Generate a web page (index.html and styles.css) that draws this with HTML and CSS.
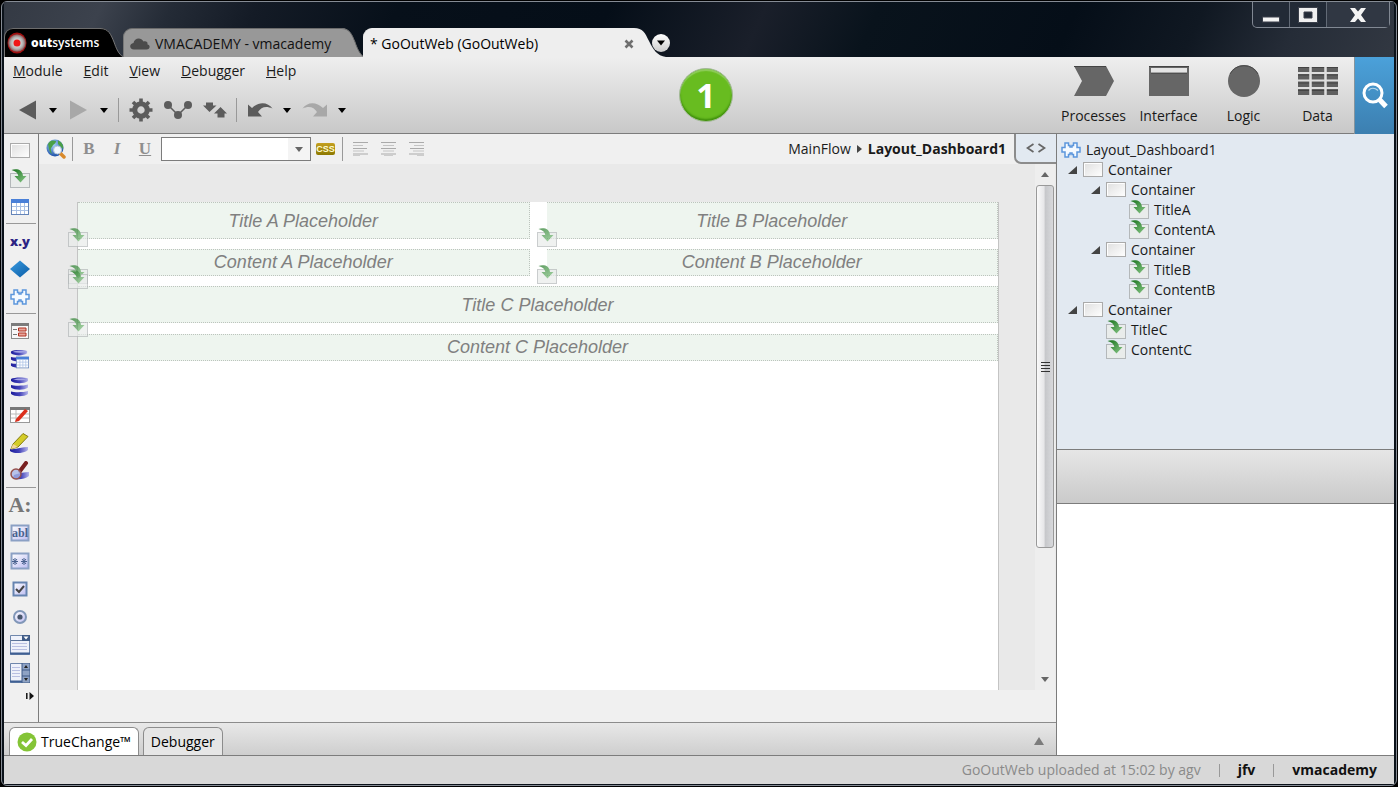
FILE: index.html
```html
<!DOCTYPE html>
<html lang="en">
<head>
<meta charset="utf-8">
<title>GoOutWeb</title>
<link rel="stylesheet" href="styles.css">
</head>
<body>
<svg class="defs" width="0" height="0" aria-hidden="true">
  <defs>
    <linearGradient id="gBox" x1="0" y1="0" x2="1" y2="1"><stop offset="0" stop-color="#dedede"/><stop offset="1" stop-color="#fff"/></linearGradient>
    <linearGradient id="gGreen" x1="0" y1="0" x2="1" y2="1"><stop offset="0" stop-color="#15701a"/><stop offset="1" stop-color="#8cc98a"/></linearGradient>
    <linearGradient id="gBlue" x1="0" y1="0" x2="1" y2="1"><stop offset="0" stop-color="#3a9be0"/><stop offset="1" stop-color="#0a5ca6"/></linearGradient>
    <linearGradient id="gDisk" x1="0" y1="0" x2="1" y2="0"><stop offset="0" stop-color="#1c1c9c"/><stop offset=".5" stop-color="#4242b8"/><stop offset="1" stop-color="#b4b4ea"/></linearGradient>
    <linearGradient id="gField" x1="0" y1="0" x2="1" y2="1"><stop offset="0" stop-color="#fff"/><stop offset="1" stop-color="#bcbcf2"/></linearGradient>
    <radialGradient id="gGlobe" cx=".4" cy=".3" r=".7"><stop offset="0" stop-color="#a8d4f8"/><stop offset="1" stop-color="#1c50a8"/></radialGradient>
    <radialGradient id="gLogo"><stop offset="0" stop-color="#fff"/><stop offset=".7" stop-color="#b0b0b0"/><stop offset="1" stop-color="#8a5050"/></radialGradient>
    <symbol id="i-container" viewBox="0 0 20 20"><rect x=".5" y="2.500" width="19" height="14" fill="url(#gBox)" stroke="#aaa"/><path d="M1.500 15.500V3.500H18.500" fill="none" stroke="#fff"/></symbol>
    <symbol id="i-placeholder" viewBox="0 0 20 20"><rect x=".5" y="4.500" width="19" height="14" fill="#e9eceb" stroke="#b4b8ba"/><path d="M1.500 1C6-.8 12.500 0 13 7H16.500L10.500 13.500 4.500 7H8.300C8 4 5.500 2 1.500 1Z" fill="url(#gGreen)"/></symbol>
    <symbol id="i-webblock" viewBox="0 0 20 18"><path d="M4 2H7.500V4.500H9V6H11V4.500H12.500V2H16V6.500H19V11H16V16H12.500V13.500H11V12H9V13.500H7.500V16H4V11H1V6.500H4Z" fill="#f5faff" stroke="#5c96dc" stroke-width="1.500"/></symbol>
    <symbol id="i-caret" viewBox="0 0 8 5"><path d="M0 0H8L4 5Z"/></symbol>
    <symbol id="i-table" viewBox="0 0 20 18"><rect x="1.500" y="1.500" width="17" height="15" fill="#fff" stroke="#6484b8"/><path d="M1 1H19V5H1Z" fill="#4a80d8"/><path d="M2 8.500H18M2 12.500H18M6.500 5V16M10.500 5V16M14.500 5V16" stroke="#a9c0e4"/></symbol>
    <symbol id="i-disks" viewBox="0 0 20 20"><g fill="url(#gDisk)"><path d="M1 2C4 0 14 0 18 1.500V4C14 7 5 7 1 4Z"/><path d="M1 8C4 9 14 9 18 7.500V10.500C14 13.500 5 13.500 1 10.500Z"/><path d="M1 14.500C4 15.500 14 15.500 18 14V17C14 20 5 20 1 17Z"/></g><path d="M3 2.500C7 1 13 1 17 2.500C13 3.600 7 3.600 3 2.500Z" fill="#a4a4e4"/></symbol>
    <symbol id="i-left" viewBox="0 0 15 14"><path d="M0 .5H15M0 6.500H14M0 12H15" stroke="#aaa"/><path d="M0 3.500H10M0 9H11M0 13.700H7" stroke="#c4c4c4"/></symbol>
    <symbol id="i-center" viewBox="0 0 15 14"><path d="M0 .5H15M0 6.500H15M0 12H15" stroke="#aaa"/><path d="M2 3.500H13M2 9H13M3 13.700H12" stroke="#c4c4c4"/></symbol>
    <symbol id="i-right" viewBox="0 0 15 14"><path d="M0 .5H15M1 6.500H15M0 12H15" stroke="#aaa"/><path d="M5 3.500H15M4 9H15M8 13.700H15" stroke="#c4c4c4"/></symbol>
  </defs>
</svg>

<div class="window">
  <header class="titlebar">
    <nav class="tabs">
      <a class="tab tab-brand" href="#">
        <span class="tab-body">
          <svg width="20" height="22" viewBox="0 0 20 22"><ellipse cx="10" cy="11" rx="9.500" ry="10.500" fill="#a01010"/><circle cx="10" cy="11" r="8.800" fill="url(#gLogo)"/><circle cx="10" cy="11" r="3.500" fill="#f01818"/></svg>
          <span class="brand"><b>out</b>systems</span>
        </span>
        <svg class="slope" width="23" height="29" viewBox="0 0 23 29"><path d="M0 0C9 0 11 7 14 14C16 20 19 27 23 29H0Z" fill="#000"/><path d="M0 .5C9 .5 11 7 14 14C16 20 19 27 23 28.500" fill="none" stroke="#777"/></svg>
      </a>
      <a class="tab tab-server" href="#">
        <span class="tab-body">
          <svg width="20" height="12" viewBox="0 0 20 12"><path d="M4 11.500C-1 11.500-1 5.500 3.500 5C4 0 11-1.500 13.500 3.500C17 2.500 18 5 17.300 6.200C21 7 20 11.500 16.500 11.500Z" fill="#4b4b4b"/></svg>
          <span>VMACADEMY - vmacademy</span>
        </span>
        <svg class="slope" width="23" height="29" viewBox="0 0 23 29"><path d="M0 0C9 0 11 7 14 14C16 20 19 27 23 29H0Z" fill="#989898"/><path d="M0 .5C9 .5 11 7 14 14C16 20 19 27 23 28.500" fill="none" stroke="#6c6c6c"/></svg>
      </a>
      <div class="tab tab-module">
        <span class="tab-body">
          <span>* GoOutWeb (GoOutWeb)</span>
          <button class="tab-close" aria-label="Close tab"><svg width="10" height="10" viewBox="0 0 10 10"><path d="M1.500 1.500L8.500 8.500M8.500 1.500L1.500 8.500" stroke="#6e6e6e" stroke-width="2.600"/></svg></button>
        </span>
        <svg class="slope" width="32" height="29" viewBox="0 0 32 29"><path d="M0 0C9 0 11 5 15 13C19 21 23 28 32 29H0Z" fill="#eee"/></svg>
      </div>
      <button class="tab-list" aria-label="All tabs"><svg width="8" height="6"><use href="#i-caret"/></svg></button>
    </nav>
    <div class="win-controls">
      <button aria-label="Minimize"><svg width="18" height="16" viewBox="0 0 18 16"><rect x=".5" y="10" width="17" height="5" fill="#f4f4f4" stroke="#3a3f4a"/></svg></button>
      <button aria-label="Maximize"><svg width="20" height="16" viewBox="0 0 20 16"><path d="M.5 .5H19.500V15.500H.5ZM6 5V11H14V5Z" fill="#f0f0f0" fill-rule="evenodd" stroke="#3a3f4a"/></svg></button>
      <button class="win-close" aria-label="Close"><svg width="18" height="16" viewBox="0 0 18 16"><path d="M1 1H6L9 4.500L12 1H17L12 8L17 15H12L9 11.500L6 15H1L6 8Z" fill="#f4f4f4"/></svg></button>
    </div>
  </header>

  <div class="ribbon">
    <div class="commands">
      <nav class="menu">
        <button><u>M</u>odule</button><button><u>E</u>dit</button><button><u>V</u>iew</button><button><u>D</u>ebugger</button><button><u>H</u>elp</button>
      </nav>
      <div class="toolbar">
        <button aria-label="Back"><svg width="19" height="20" viewBox="0 0 19 20"><path d="M1 10L18 .5V19.500Z" fill="#5c5c5c"/></svg></button>
        <button class="drop" aria-label="Back history"><svg width="8" height="5"><use href="#i-caret"/></svg></button>
        <button aria-label="Forward"><svg width="19" height="20" viewBox="0 0 19 20"><path d="M18 10L1 .5V19.500Z" fill="#a8a8a8"/></svg></button>
        <button class="drop" aria-label="Forward history"><svg width="8" height="5"><use href="#i-caret"/></svg></button>
        <span class="sep"></span>
        <button aria-label="Settings"><svg width="24" height="24" viewBox="-12 -12 24 24"><circle r="6.200" fill="none" stroke="#5c5c5c" stroke-width="5"/><path d="M0-8V-11.500M0 8V11.500M-8 0H-11.500M8 0H11.500M-5.700-5.700L-8-8M5.700-5.700L8-8M-5.700 5.700L-8 8M5.700 5.700L8 8" stroke="#5c5c5c" stroke-width="3.600"/></svg></button>
        <button aria-label="Dependencies"><svg width="28" height="18" viewBox="0 0 28 18"><path d="M4 4L14 14L24 4" fill="none" stroke="#5c5c5c" stroke-width="1.500"/><g fill="#5c5c5c"><circle cx="4" cy="4" r="4"/><circle cx="24" cy="4" r="4"/><circle cx="14" cy="14" r="4"/></g></svg></button>
        <button aria-label="Publish"><svg width="24" height="16" viewBox="0 0 24 16"><path d="M3 .5H10V3.500H13.500L6.500 10L0 3.500H3Z" fill="#5c5c5c"/><path d="M17.500 5L24 11.500H21.500V15.500H14.500V11.500H11Z" fill="#5c5c5c"/></svg></button>
        <span class="sep"></span>
        <button aria-label="Undo"><svg width="26" height="16" viewBox="0 0 26 16"><path d="M1 2.500L5 6C12-1 21 0 25.500 6.500C19 3.500 14 5 11 10L15 14.500H1Z" fill="#5c5c5c"/></svg></button>
        <button class="drop" aria-label="Undo list"><svg width="8" height="5"><use href="#i-caret"/></svg></button>
        <button aria-label="Redo"><svg width="26" height="16" viewBox="0 0 26 16"><path d="M25 2.500L21 6C14-1 5 0 .5 6.500C7 3.500 12 5 15 10L11 14.500H25Z" fill="#a8a8a8"/></svg></button>
        <button class="drop" aria-label="Redo list"><svg width="8" height="5"><use href="#i-caret"/></svg></button>
      </div>
    </div>
    <button class="step" aria-label="1-Click Publish"><span>1</span></button>
    <nav class="layers">
      <button><svg width="40" height="32" viewBox="0 0 40 32"><path d="M0 1H32L40 16L32 31H0L8 16Z" fill="#666"/><path d="M0 1.500H32" stroke="#444"/></svg>Processes</button>
      <button><svg width="40" height="32" viewBox="0 0 40 32"><path d="M0 1H40V31H0Z" fill="#666"/><path d="M0 1.500H40" stroke="#444"/><path d="M2 3H38V7.500H2Z" fill="#e4e4e4"/><path d="M2 8.500H38" stroke="#505050"/></svg>Interface</button>
      <button><svg width="40" height="32" viewBox="0 0 40 32"><circle cx="20" cy="16" r="16" fill="#666"/><path d="M6 9A16 16 0 0 1 34 9" fill="none" stroke="#484848"/></svg>Logic</button>
      <button><svg width="40" height="32" viewBox="0 0 40 32"><path d="M0 2H40V30H0Z" fill="#606060"/><path d="M0 2.500H40M0 10H40M0 18H40M0 25.500H40" stroke="#444"/><path d="M0 8H40M0 15.500H40M0 23H40" stroke="#dedede" stroke-width="2"/><path d="M12.500 2V30M27.500 2V30" stroke="#dedede" stroke-width="2.500"/></svg>Data</button>
    </nav>
    <button class="search" aria-label="Search"><svg width="28" height="28" viewBox="0 0 28 28"><path d="M18 17L25 24.500" stroke="#fff" stroke-width="5"/><circle cx="12" cy="11" r="9" fill="none" stroke="#fff" stroke-width="3"/><path d="M7.500 8.500C10 5.500 14 6 17 8.500" fill="none" stroke="#b4d6ec" stroke-width="1.200"/></svg></button>
  </div>

  <main class="workspace">
    <section class="left">
      <div class="designer">
        <aside class="toolbox">
          <button aria-label="Container"><svg width="20" height="20"><use href="#i-container"/></svg></button>
          <button aria-label="Placeholder"><svg width="20" height="20"><use href="#i-placeholder"/></svg></button>
          <button aria-label="Table"><svg width="20" height="18"><use href="#i-table"/></svg></button>
          <hr>
          <button class="xy" aria-label="Expression">x.y</button>
          <button aria-label="If"><svg width="20" height="18" viewBox="0 0 20 18"><path d="M10 .5L20 9L10 17.500L0 9Z" fill="url(#gBlue)"/></svg></button>
          <button aria-label="Web block"><svg width="20" height="18"><use href="#i-webblock"/></svg></button>
          <hr>
          <button aria-label="Form"><svg width="20" height="18" viewBox="0 0 20 18"><rect x="1.500" y="1.500" width="17" height="15" fill="#f8f8f8" stroke="#8c8c8c"/><path d="M1 1H19V4H1Z" fill="#7c7c7c"/><path d="M3 7.500H7M3 12.500H7" stroke="#777"/><path d="M8.500 6H16V9H8.500ZM8.500 11H16V14H8.500Z" fill="#e8a69c" stroke="#b03020"/></svg></button>
          <button aria-label="Table records"><svg width="20" height="20" viewBox="0 0 20 20"><use href="#i-disks" width="19" height="20"/><svg x="5" y="7" width="15" height="13" viewBox="0 0 20 18"><use href="#i-table"/></svg></svg></button>
          <button aria-label="List records"><svg width="20" height="20"><use href="#i-disks"/></svg></button>
          <button aria-label="Edit record"><svg width="20" height="18" viewBox="0 0 20 18"><rect x=".5" y="1.500" width="19" height="15" fill="#fff" stroke="#999"/><path d="M0 1H20V4H0Z" fill="#777"/><path d="M1 8H19M1 12H19M6 4V16" stroke="#bbb"/><path d="M6 13L15 3L18 5L9 15L5 16Z" fill="#dc2f1c"/></svg></button>
          <button aria-label="Show record"><svg width="20" height="20" viewBox="0 0 20 20"><path d="M0 16C5 17 12 14 18 14V17C13 21 4 21 0 18Z" fill="url(#gDisk)"/><path d="M3 11L13 .5L18 3.500L8 14L1 16Z" fill="#d4cc28" stroke="#857c10"/><path d="M3 11L8 14L1 16Z" fill="#f3d79a"/></svg></button>
          <button aria-label="Search record"><svg width="20" height="20" viewBox="0 0 20 20"><path d="M4 14C9 12 15 11 19 11V15C14 19 6 19 3 17Z" fill="url(#gDisk)"/><path d="M10 10L16 2" stroke="#782020" stroke-width="4" stroke-linecap="round"/><circle cx="6" cy="13" r="5" fill="#a9b6e8" fill-opacity=".8" stroke="#96504c" stroke-width="1.500"/></svg></button>
          <hr>
          <button class="label-tool" aria-label="Label">A:</button>
          <button aria-label="Input"><svg width="20" height="18" viewBox="0 0 20 18"><rect x="1.500" y="1.500" width="17" height="15" fill="url(#gField)" stroke="#8ba0c4" stroke-width="2"/><text class="glyph" x="10" y="13" text-anchor="middle">abl</text></svg></button>
          <button aria-label="Password"><svg width="20" height="18" viewBox="0 0 20 18"><rect x="1.500" y="1.500" width="17" height="15" fill="url(#gField)" stroke="#8ba0c4" stroke-width="2"/><path d="M2 9.500H8M5 6V13M3 7L7 12M7 7L3 12M11 9.500H17M14 6V13M12 7L16 12M16 7L12 12" stroke="#48618e"/></svg></button>
          <button aria-label="Check box"><svg width="16" height="16" viewBox="0 0 16 16"><rect x="1.500" y="1.500" width="13" height="13" fill="url(#gField)" stroke="#6684b0" stroke-width="2"/><path d="M4 8L7 11L12 5" fill="none" stroke="#444" stroke-width="2"/></svg></button>
          <button aria-label="Radio button"><svg width="16" height="16" viewBox="0 0 16 16"><circle cx="8" cy="8" r="6" fill="url(#gField)" stroke="#8197b8" stroke-width="2"/><circle cx="8" cy="8" r="2.600" fill="#48566c"/></svg></button>
          <button aria-label="Combo box"><svg width="20" height="20" viewBox="0 0 20 20"><path d="M.5 .5H19.500V19.500H.5Z" fill="#eef1fa" stroke="#6f87ac"/><path d="M1 5.500H19V0" stroke="#5b7399" fill="none"/><path d="M12 0H20V6H12Z" fill="#3f5b87"/><path d="M13.500 1.500H18.500L16 4.500Z" fill="#fff"/><path d="M2 8.500H17M2 11.500H17M2 14.500H17" stroke="#b9c0e2"/><path d="M0 18.500H20" stroke="#3f5f93" stroke-width="2"/></svg></button>
          <button aria-label="List box"><svg width="20" height="20" viewBox="0 0 20 20"><path d="M.5 .5H19.500V19.500H.5Z" fill="#eef1fa" stroke="#6f87ac"/><path d="M12 0H20V20H12Z" fill="#8fa3c4" stroke="#3f5b87"/><path d="M12 7H20M12 13H20" stroke="#3f5b87"/><path d="M14 5H18L16 2ZM14 15H18L16 18Z" fill="#222"/><path d="M2 4.500H10M2 7.500H10M2 10.500H10M2 13.500H10" stroke="#b9c0e2"/><path d="M0 18.500H12" stroke="#3f5f93" stroke-width="2"/></svg></button>
          <button class="expand" aria-label="Expand toolbox"><svg width="8" height="8" viewBox="0 0 8 8"><path d="M.8 1V7" stroke="#111" stroke-width="1.500"/><path d="M3.500 0L8 4L3.500 8Z" fill="#111"/></svg></button>
        </aside>

        <div class="editor">
          <div class="format-bar">
            <button class="globe" aria-label="Preview in browser"><svg width="20" height="20" viewBox="0 0 20 20"><circle cx="9" cy="9" r="8.500" fill="url(#gGlobe)"/><path d="M2 5C4 1 7 1 10 2C10 5 7 5 6 8C4 9 5 12 6 15C3 13 3 9 2 5ZM12 1.500C16 3 18 7 17 10L14 7L12 5Z" fill="#4aa047"/><path d="M14.500 14.500L18 18" stroke="#d98a2c" stroke-width="3.500" stroke-linecap="round"/><circle cx="11.500" cy="11" r="4" fill="#f2f8ff" stroke="#b4c4d6"/></svg></button>
            <span class="sep"></span>
            <div class="styles"><button class="fmt">B</button><button class="fmt fmt-i">I</button><button class="fmt fmt-u">U</button></div>
            <div class="combo"><select aria-label="Style"><option></option></select><svg width="8" height="5"><use href="#i-caret"/></svg></div>
            <button class="css-btn">CSS</button>
            <span class="sep"></span>
            <div class="aligns">
              <button aria-label="Align left"><svg width="15" height="14"><use href="#i-left"/></svg></button>
              <button aria-label="Align center"><svg width="15" height="14"><use href="#i-center"/></svg></button>
              <button aria-label="Align right"><svg width="15" height="14"><use href="#i-right"/></svg></button>
            </div>
            <div class="crumbs"><a href="#">MainFlow</a><svg width="5" height="8" viewBox="0 0 5 8"><path d="M0 0L5 4L0 8Z" fill="#444"/></svg><b>Layout_Dashboard1</b></div>
            <button class="code-btn" aria-label="Source"><svg width="20" height="10" viewBox="0 0 20 10"><path d="M7.500 1L1.500 5L7.500 9M12.500 1L18.500 5L12.500 9" fill="none" stroke="#666" stroke-width="1.800"/></svg></button>
          </div>
          <div class="canvas">
            <div class="page">
              <div class="columns">
                <div class="column">
                  <div class="ph title">Title A Placeholder<svg class="mark mark-end" width="20" height="20"><use href="#i-placeholder"/></svg></div>
                  <div class="ph content">Content A Placeholder<svg class="mark mark-end" width="20" height="20"><use href="#i-placeholder"/></svg></div>
                </div>
                <div class="column">
                  <div class="ph title">Title B Placeholder<svg class="mark mark-end" width="20" height="20"><use href="#i-placeholder"/></svg></div>
                  <div class="ph content">Content B Placeholder<svg class="mark mark-end" width="20" height="20"><use href="#i-placeholder"/></svg></div>
                </div>
              </div>
              <div class="column column-wide">
                <div class="ph title">Title C Placeholder<svg class="mark mark-start" width="20" height="20"><use href="#i-placeholder"/></svg></div>
                <div class="ph content">Content C Placeholder<svg class="mark mark-start" width="20" height="20"><use href="#i-placeholder"/></svg></div>
              </div>
            </div>
            <div class="scroll">
              <button aria-label="Scroll up"><svg class="flip" width="8" height="5"><use href="#i-caret"/></svg></button>
              <div class="track"><div class="thumb"><i></i><i></i><i></i><i></i></div></div>
              <button aria-label="Scroll down"><svg width="8" height="5"><use href="#i-caret"/></svg></button>
            </div>
          </div>
          <div class="gutter"></div>
        </div>
      </div>
      <div class="panel-tabs">
        <button class="panel-tab active"><svg width="20" height="20" viewBox="0 0 20 20"><circle cx="10" cy="10" r="9.500" fill="#84c436"/><path d="M5 10L9 13.500L15 7" fill="none" stroke="#fff" stroke-width="2.800"/></svg>TrueChange™</button>
        <button class="panel-tab">Debugger</button>
        <button class="panel-up" aria-label="Expand panel"><svg width="10" height="8" viewBox="0 0 10 8"><path d="M5 0L10 8H0Z" fill="#7c7c7c"/></svg></button>
      </div>
    </section>

    <aside class="right">
      <div class="tree">
        <div class="node root"><svg width="20" height="18"><use href="#i-webblock"/></svg>Layout_Dashboard1</div>
        <ul>
          <li><div class="node"><svg class="tri" width="9" height="9"><path d="M9 0V8H0Z" fill="#444"/></svg><svg width="20" height="20"><use href="#i-container"/></svg>Container</div>
            <ul>
              <li><div class="node"><svg class="tri" width="9" height="9"><path d="M9 0V8H0Z" fill="#444"/></svg><svg width="20" height="20"><use href="#i-container"/></svg>Container</div>
                <ul>
                  <li class="node leaf"><svg width="20" height="20"><use href="#i-placeholder"/></svg>TitleA</li>
                  <li class="node leaf"><svg width="20" height="20"><use href="#i-placeholder"/></svg>ContentA</li>
                </ul>
              </li>
              <li><div class="node"><svg class="tri" width="9" height="9"><path d="M9 0V8H0Z" fill="#444"/></svg><svg width="20" height="20"><use href="#i-container"/></svg>Container</div>
                <ul>
                  <li class="node leaf"><svg width="20" height="20"><use href="#i-placeholder"/></svg>TitleB</li>
                  <li class="node leaf"><svg width="20" height="20"><use href="#i-placeholder"/></svg>ContentB</li>
                </ul>
              </li>
            </ul>
          </li>
          <li><div class="node"><svg class="tri" width="9" height="9"><path d="M9 0V8H0Z" fill="#444"/></svg><svg width="20" height="20"><use href="#i-container"/></svg>Container</div>
            <ul>
              <li class="node leaf"><svg width="20" height="20"><use href="#i-placeholder"/></svg>TitleC</li>
              <li class="node leaf"><svg width="20" height="20"><use href="#i-placeholder"/></svg>ContentC</li>
            </ul>
          </li>
        </ul>
      </div>
      <div class="props-head"></div>
      <div class="props"></div>
    </aside>
  </main>

  <footer class="status">
    <span class="status-msg">GoOutWeb uploaded at 15:02 by agv</span><i></i><b>jfv</b><i></i><b>vmacademy</b>
  </footer>
</div>
</body>
</html>
```
FILE: styles.css
```css
* { box-sizing: border-box; }
body {
  margin: 0;
  padding: 1px;
  height: 100vh;
  background: #000;
  color: #1a1a1a;
  font: 14px/20px "Open Sans", "Noto Sans", sans-serif;
}
.defs { position: absolute; }
svg { display: block; flex: none; }
button {
  display: flex;
  align-items: center;
  justify-content: center;
  margin: 0;
  padding: 0;
  border: 0;
  background: none;
  color: inherit;
  font: inherit;
}
a { color: inherit; text-decoration: none; }
ul { margin: 0; padding: 0; list-style: none; }

.window {
  display: flex;
  flex-direction: column;
  height: 100%;
  padding: 0 2px 1px;
  border: 1px solid #858b94;
  border-radius: 6px;
  background: #0b121a;
}

/* title bar */
.titlebar {
  display: flex;
  justify-content: space-between;
  height: 55px;
  background: linear-gradient(115deg, #343a44 0, #3c424d 7%, #242b36 12%, #141b26 18%, #07101a 28%, #050e18 43%, #1a1f2a 54%, #09131c 62%, #050e18 76%, #101822 85%, #252c37 92%, #323842 100%);
}
.tabs { display: flex; align-items: flex-end; }
.tab { display: flex; height: 29px; }
.tab-body {
  display: flex;
  align-items: center;
  flex: 1;
  min-width: 0;
  padding-top: 2px;
  border-top: 1px solid #6c6c6c;
  border-left: 1px solid #777;
  border-top-left-radius: 9px;
  white-space: nowrap;
}
.tab-brand { width: 119px; color: #fff; }
.tab-brand .tab-body { position: relative; z-index: 1; gap: 4px; padding: 0 0 0 2px; background: #000; }
.brand { font-size: 12px; font-weight: 600; }
.brand b { font-weight: 800; }
.tab-server { width: 241px; color: #111; }
.tab-server .tab-body { position: relative; z-index: 1; gap: 5px; padding-left: 6px; background: #989898; }
.tab-module { width: 303px; margin-left: -1px; color: #000; }
.tab-module .tab-body { padding-left: 6px; border-color: #eee; background: #eee; }
.tab-close { margin-left: auto; width: 10px; }
.tab-list {
  width: 18px;
  height: 18px;
  margin: 0 0 5px -14px;
  border-radius: 50%;
  background: linear-gradient(#fff, #ccc);
}
.win-controls {
  display: flex;
  height: 26px;
  margin-right: 4px;
  border: 1px solid #818893;
  border-top: 0;
  border-radius: 0 0 5px 5px;
  background: #222a36;
}
.win-controls button { width: 37px; border-right: 1px solid #626a76; }
.win-controls .win-close { width: 62px; border: 0; background: #303743; }

/* ribbon */
.ribbon {
  position: relative;
  display: flex;
  height: 77px;
  border-bottom: 1px solid #7c7c7c;
  background: linear-gradient(#eee, #c8c8c8);
}
.commands { flex: 1; }
.menu { display: flex; gap: 21px; padding: 4px 0 0 9px; height: 28px; }
.menu button { height: 20px; }
.toolbar { display: flex; align-items: center; height: 48px; padding: 2px 0 0 14px; }
.toolbar button { margin-right: 11px; }
.toolbar .drop { width: 14px; margin-right: 9px; margin-left: -2px; }
.toolbar .drop + .sep { margin-left: -2px; }
.sep { width: 1px; height: 24px; background: #999; }
.toolbar .sep { margin-right: 10px; margin-left: -2px; }
.toolbar .sep ~ .drop { margin-left: -4px; margin-right: 8px; }
.step {
  position: absolute;
  top: 11px;
  left: calc(50% - 20px);
  width: 54px;
  height: 54px;
  border: 1px solid #a4b89a;
  border-radius: 50%;
  background: #68bc20;
  box-shadow: inset 0 -2px 2px #3f8f0c, inset 0 2px 1px #8fcc5c;
  color: #fff;
  font: bold 34px/50px "Open Sans", sans-serif;
}
.layers { display: flex; }
.layers button { flex-direction: column; justify-content: flex-start; width: 75px; padding-top: 8px; gap: 9px; }
.layers button:last-child { width: 73px; }
.search { width: 40px; height: 77px; border-left: 1px solid #84949e; background: linear-gradient(#4ba1da, #3c7fb0); }

/* workspace */
.workspace { display: flex; flex: 1; min-height: 0; }
.left { display: flex; flex-direction: column; flex: 1; min-width: 0; }
.designer { display: flex; flex: 1; min-height: 0; background: #f0f0f0; }
.toolbox { width: 35px; padding: 3px 2px 0; border-right: 1px solid #7c7c7c; }
.toolbox button { width: 28px; height: 28px; }
.toolbox hr { height: 1px; margin: 2px 0 3px; border: 0; background: #999; }
.toolbox .xy { color: #2c2484; font-weight: 800; font-size: 13px; }
.toolbox .label-tool { color: #777; font: bold 22px/28px "Liberation Serif", serif; }
.toolbox .expand { width: 31px; height: 18px; justify-content: flex-end; padding-right: 3px; }
.glyph { font: bold 12px "Liberation Serif", serif; fill: #48618e; }
.editor { display: flex; flex-direction: column; flex: 1; min-width: 0; }
.format-bar { display: flex; align-items: center; height: 30px; padding-left: 7px; }
.globe { margin-right: 6px; }
.styles { display: flex; width: 84px; margin: 0 2px; }
.fmt { width: 28px; height: 24px; color: #8e8e8e; font: bold 17px/24px "Liberation Serif", serif; }
.fmt-i { font-style: italic; }
.fmt-u { text-decoration: underline; }
.combo { position: relative; width: 150px; height: 24px; margin-right: 5px; }
.combo select { width: 100%; height: 100%; border: 1px solid #7c7c7c; border-radius: 0; background: linear-gradient(90deg, #fff 85%, #f4f4f4 85%); appearance: none; font: inherit; }
.combo svg { position: absolute; top: 10px; right: 8px; fill: #666; pointer-events: none; }
.css-btn { width: 19px; height: 12px; margin-right: 7px; border-radius: 2px; background: linear-gradient(#c4a020, #8c7800); color: #fffbd0; font: bold 9px/12px "Liberation Sans", sans-serif; }
.aligns { display: flex; gap: 13px; margin-left: 10px; }
.crumbs { display: flex; align-items: center; gap: 6px; margin-left: auto; margin-right: 8px; }
.code-btn { align-self: flex-start; width: 42px; height: 30px; border: 2px solid #8c8c8c; border-width: 0 0 2px 2px; border-bottom-left-radius: 7px; background: #e2e9f1; }
.canvas { display: flex; flex: 1; min-height: 0; padding: 0 1px 0 38px; background: #e9e9e9; }
.page { flex: 1; margin: 38px 36px 0 0; border: 1px solid #c4c4c4; border-width: 0 1px; background: #fff; color: #808080; font: italic 18px/20px "Liberation Sans", Arial, sans-serif; text-align: center; }
.columns { display: grid; grid-template-columns: 1fr 1fr; column-gap: 17px; margin-bottom: 10px; }
.ph { position: relative; border: 1px dotted #bcc4bd; background: #eef5ef; }
.column .ph { border-left-width: 0; }
.title { height: 37px; margin-bottom: 10px; padding-top: 8px; }
.column-wide .title { margin-bottom: 11px; }
.content { height: 27px; padding-top: 2px; }
.mark { position: absolute; left: -10px; opacity: .7; }
.mark-end { bottom: -10px; }
.mark-start { top: -17px; }
.scroll { display: flex; flex-direction: column; width: 20px; padding: 0 1px; background: #eee; }
.scroll button { width: 18px; height: 21px; fill: #666; }
.flip { transform: rotate(180deg); }
.track { flex: 1; }
.thumb { display: flex; flex-direction: column; align-items: center; justify-content: center; gap: 2px; height: 75%; border: 1px solid #999; border-radius: 3px; background: linear-gradient(90deg, #fafafa, #e6e6e8 45%, #c6c7ca 50%, #d8d9dc); }
.thumb i { width: 9px; height: 1px; background: #333; }
.gutter { height: 32px; }
.panel-tabs { display: flex; align-items: flex-end; gap: 4px; height: 33px; padding: 0 12px 0 5px; border-top: 1px solid #8c8c8c; background: linear-gradient(#e8e8e8, #cecece); }
.panel-tab { height: 28px; padding: 0 7px; gap: 4px; border: 1px solid #8c8c8c; border-bottom: 0; border-radius: 6px 6px 0 0; background: #e6e6e6; color: #000; }
.panel-tab.active { background: #fff; }
.panel-up { align-self: center; margin-left: auto; padding-top: 4px; }

/* widget tree and properties */
.right { display: flex; flex-direction: column; width: 338px; border-left: 1px solid #7c7c7c; background: #fff; }
.tree { flex: none; height: 315px; padding: 6px 0 0 11px; background: #e2e9f1; }
.tree ul ul { padding-left: 23px; }
.node { display: flex; align-items: center; gap: 5px; height: 20px; }
.root { margin-left: -7px; }
.leaf { padding-left: 15px; }
.tri { margin-right: 1px; }
.props-head { height: 55px; border: 1px solid #7c7c7c; border-width: 1px 0; background: linear-gradient(#e6e6e6, #cacaca); }
.props { flex: 1; }

/* status bar */
.status { display: flex; align-items: center; justify-content: flex-end; gap: 18px; height: 29px; padding-right: 17px; border-top: 1px solid #7c7c7c; background: #d8d8d8; color: #111; }
.status-msg { color: #8a8a8a; }
.status i { width: 1px; height: 13px; background: #999; }
```
